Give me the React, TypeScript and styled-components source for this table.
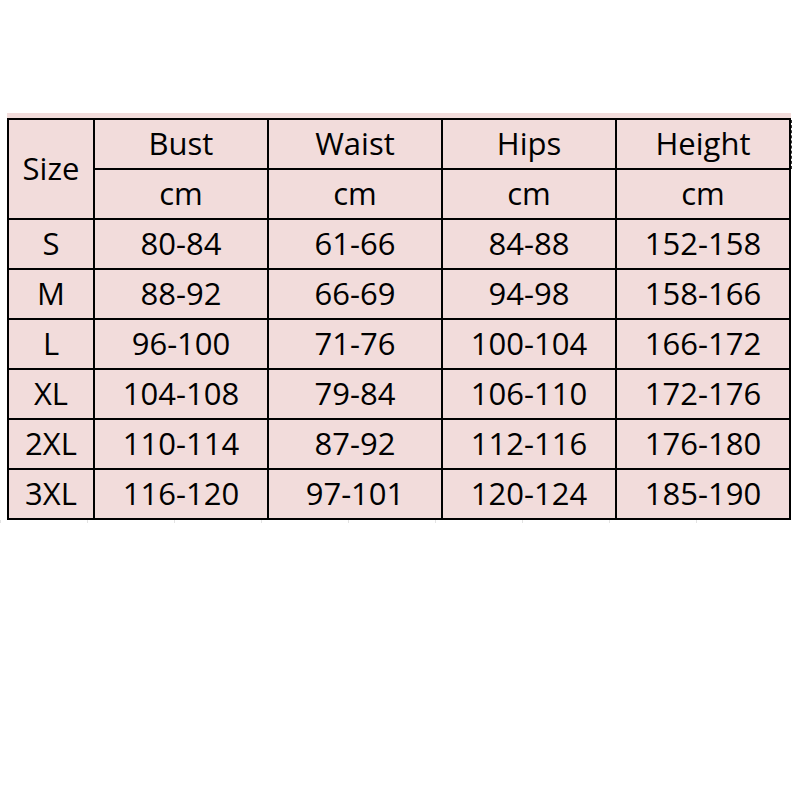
import React from "react";
import styled, { createGlobalStyle } from "styled-components";

const Global = createGlobalStyle`
  html, body { margin: 0; padding: 0; background: #ffffff; }
  body { width: 800px; height: 800px; overflow: hidden; }
`;

const Page = styled.div`
  width: 800px;
  height: 800px;
  padding-top: 113px;
  box-sizing: border-box;
`;

const Band = styled.div`
  margin-left: 7px;
  width: 784px;
  background: #f2dcdb;
  padding-top: 5px;
  position: relative;
`;

const Table = styled.div`
  display: grid;
  grid-template-columns: 86px 174px 174px 174px 174px;
  grid-auto-rows: 50px;
  border-left: 2px solid #000;
  border-top: 2px solid #000;
  width: max-content;
  font-family: "Open Sans", "Liberation Sans", sans-serif;
  font-size: 31px;
  color: #000;
`;

const Cell = styled.div<{ $rowSpan?: number }>`
  display: flex;
  align-items: center;
  justify-content: center;
  border-right: 2px solid #000;
  border-bottom: 2px solid #000;
  box-sizing: border-box;
  grid-row: ${(p) => (p.$rowSpan ? `span ${p.$rowSpan}` : "auto")};
  line-height: 1;
  padding-bottom: 2px;
`;

const Below = styled.div`
  display: grid;
  grid-template-columns: 87px 87px 87px 87px 87px 87px 87px 87px 87px;
  height: 3px;
  margin-left: 0;
  width: 784px;
`;

const Tick = styled.div`
  border-left: 1px solid #e3e3e3;
`;

const SelMark = styled.div`
  position: absolute;
  right: -2px;
  top: 7px;
  width: 1px;
  height: 49px;
  border-left: 1px dashed #333;
`;

const headers = ["Bust", "Waist", "Hips", "Height"];
const rows: string[][] = [
  ["S", "80-84", "61-66", "84-88", "152-158"],
  ["M", "88-92", "66-69", "94-98", "158-166"],
  ["L", "96-100", "71-76", "100-104", "166-172"],
  ["XL", "104-108", "79-84", "106-110", "172-176"],
  ["2XL", "110-114", "87-92", "112-116", "176-180"],
  ["3XL", "116-120", "97-101", "120-124", "185-190"],
];

export default function App() {
  return (
    <Page>
      <Global />
      <Band>
        <SelMark />
        <Table>
          <Cell $rowSpan={2}>Size</Cell>
          {headers.map((h) => (
            <Cell key={h}>{h}</Cell>
          ))}
          {headers.map((h) => (
            <Cell key={h + "cm"}>cm</Cell>
          ))}
          {rows.map((r) =>
            r.map((v, i) => <Cell key={r[0] + i}>{v}</Cell>)
          )}
        </Table>
      </Band>
      <Below>
        {Array.from({ length: 9 }).map((_, i) => (
          <Tick key={i} />
        ))}
      </Below>
    </Page>
  );
}
